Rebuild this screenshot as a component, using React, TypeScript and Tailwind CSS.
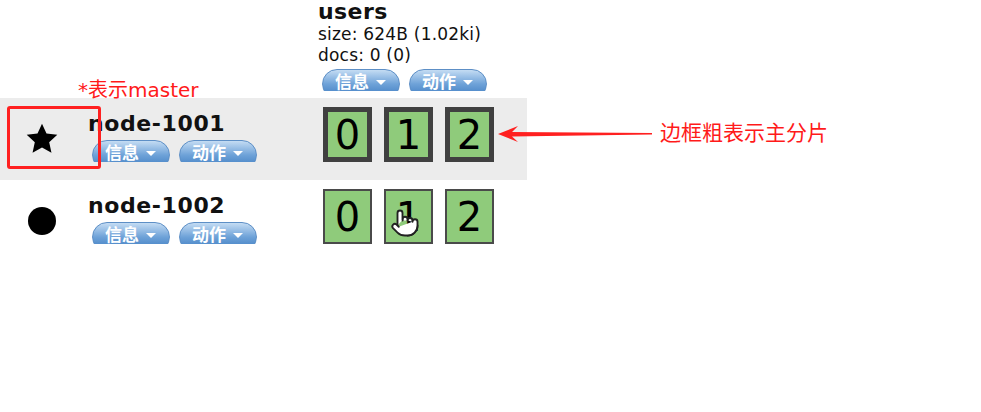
import { Pointer } from 'lucide-react';

const CJK = "font-['DejaVu_Sans','Noto_Sans_CJK_SC',sans-serif]";

function DropButton({ label }: { label: string }) {
  return (
    <div className="h-[22px] overflow-hidden">
      <span
        className={`inline-flex items-start gap-[7px] w-[78px] h-[30px] pl-[12px] pt-[3px] rounded-full border border-[#5d8fc6] bg-linear-to-b from-[#c4dcf3] via-[#6ea2d8] to-[#3c7bc0] text-white font-bold text-[17px] leading-[18px] ${CJK}`}
      >
        <span>{label}</span>
        <span className="mt-[7px] w-0 h-0 border-l-[5px] border-r-[5px] border-t-[5px] border-l-transparent border-r-transparent border-t-white" />
      </span>
    </div>
  );
}

function ButtonPair() {
  return (
    <div className="flex gap-[9px]">
      <DropButton label="信息" />
      <DropButton label="动作" />
    </div>
  );
}

function Shard({ n, primary }: { n: number; primary?: boolean }) {
  return (
    <div
      className={`w-[49px] h-[55px] flex items-center justify-center bg-[#8fcb7b] text-[40px] leading-none text-black ${
        primary ? 'border-[5px] border-[#404040]' : 'border-2 border-[#4a4a4a]'
      }`}
    >
      {n}
    </div>
  );
}

function NodeRow({ name, master }: { name: string; master?: boolean }) {
  return (
    <div className={`flex h-[82px] w-[527px] ${master ? 'bg-[#ececec]' : ''}`}>
      <div className="w-[88px] flex items-center justify-center pr-[4px]">
        {master ? (
          <svg width="36" height="36" viewBox="0 0 24 24">
            <path
              d="M12 1.8l3 6.6 7.2.8-5.4 4.9 1.5 7.1L12 17.6l-6.3 3.6 1.5-7.1-5.4-4.9 7.2-.8z"
              fill="#000"
            />
          </svg>
        ) : (
          <div className="w-[28px] h-[28px] rounded-full bg-black" />
        )}
      </div>
      <div className="w-[230px] pt-[13px]">
        <div className="text-[22px] font-bold leading-[26px] text-[#111] tracking-[0.6px]">{name}</div>
        <div className="pt-[3px] pl-[4px]">
          <ButtonPair />
        </div>
      </div>
      <div className="flex gap-[12px] pt-[9px] pl-[5px]">
        <Shard n={0} primary={master} />
        <Shard n={1} primary={master} />
        <Shard n={2} primary={master} />
      </div>
    </div>
  );
}

export default function App() {
  return (
    <div className="relative w-[981px] h-[412px] bg-white overflow-hidden font-['DejaVu_Sans',sans-serif]">
      <div className="flex h-[98px]">
        <div className="w-[318px]" />
        <div className="text-[#111]">
          <div className="text-[22px] font-bold leading-[24px] tracking-[0.4px]">users</div>
          <div className="text-[17px] leading-[21px] tracking-[0.2px]">size: 624B (1.02ki)</div>
          <div className="text-[17px] leading-[21px] tracking-[0.2px]">docs: 0 (0)</div>
          <div className="pt-[3px] pl-[4px]">
            <ButtonPair />
          </div>
        </div>
      </div>
      <NodeRow name="node-1001" master />
      <NodeRow name="node-1002" />

      {/* annotations */}
      <div className={`absolute left-[78px] top-[79px] text-[20px] leading-[22px] text-[#ff1a1a] ${CJK}`}>
        *表示master
      </div>
      <div className="absolute left-[7px] top-[106px] w-[94px] h-[63px] border-[3px] border-[#ff2020] rounded-[3px]" />
      <svg className="absolute left-[496px] top-[124px]" width="160" height="20" viewBox="0 0 160 20">
        <polygon points="2,10 22,2 16,8 156,9 156,10.5 16,12.5 22,18" fill="#ff2020" />
      </svg>
      <div className={`absolute left-[660px] top-[120px] text-[21px] leading-[26px] text-[#ff1a1a] ${CJK}`}>
        边框粗表示主分片
      </div>
      <div className="absolute left-[390px] top-[208px]">
        <Pointer size={30} fill="#fff" stroke="#222" strokeWidth={1.5} />
      </div>
    </div>
  );
}
